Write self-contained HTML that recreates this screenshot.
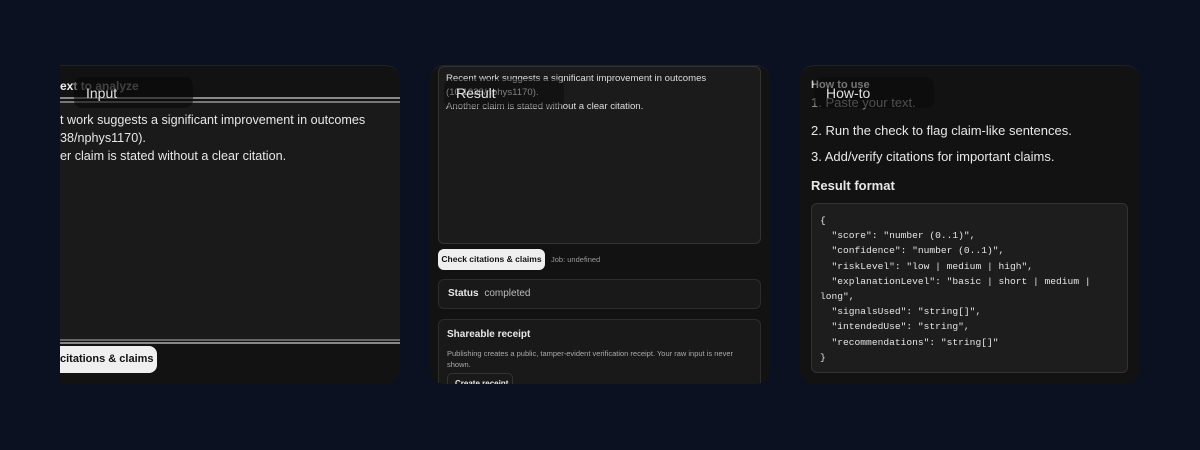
<!DOCTYPE html>
<html><head><meta charset="utf-8"><style>
*{margin:0;padding:0;box-sizing:border-box}
body{width:1200px;height:450px;background:#0b1120;font-family:"Liberation Sans",sans-serif;position:relative;overflow:hidden;color:#e8e8e8}
.a{position:absolute}
.card{position:absolute;top:65px;width:340px;height:319px;background:#121212;border-radius:14px;overflow:hidden;border-top:1px solid #222}
.pill{position:absolute;background:rgba(8,8,8,0.55);border-radius:8px;font-size:14px;color:#e0e0e0;padding-left:12px;line-height:32px}
.mono{font-family:"Liberation Mono","DejaVu Sans Mono",monospace}
</style></head><body>

<!-- Panel 1 -->
<div class="card" style="left:60px;border-radius:0 14px 14px 0">
 <div class="a" style="left:0;top:13px;font-size:12px;font-weight:bold;color:#eee">ext <span style="color:#888">to analyze</span></div>
 <div class="a" style="left:0;top:31px;width:340px;height:6px;border-top:2px solid #888;border-bottom:2px solid #777"></div>
 <div class="a" style="left:0;top:37px;width:340px;height:236px;background:#1a1a1a"></div>
 <div class="a" style="left:0;top:45px;font-size:12.6px;line-height:18px;color:#e8e8e8;white-space:nowrap">t work suggests a significant improvement in outcomes<br>38/nphys1170).<br>er claim is stated without a clear citation.</div>
 <div class="a" style="left:0;top:273px;width:340px;height:5px;border-top:2px solid #666;border-bottom:2px solid #888"></div>
 <div class="a" style="left:0;top:280px;width:97px;height:27px;background:#efefef;border-radius:0 8px 8px 0;color:#111;font-size:11px;font-weight:bold;line-height:27px;white-space:nowrap">citations &amp; claims</div>
</div>
<div class="pill" style="left:74px;top:77px;width:119px;height:31px">Input</div>

<!-- Panel 2 -->
<div class="card" style="left:430px">
 <div class="a" style="left:8px;top:0;width:323px;height:178px;background:#1b1b1b;border:1px solid #333;border-radius:6px"></div>
 <div class="a" style="left:16px;top:6px;font-size:9.6px;line-height:14px;color:#ddd;white-space:nowrap">Recent work suggests a significant improvement in outcomes<br>(10.1038/nphys1170).<br>Another claim is stated without a clear citation.</div>
 <div class="a" style="left:8px;top:183px;width:107px;height:21px;background:#efefef;border-radius:6px;color:#111;font-size:8.5px;font-weight:bold;line-height:21px;text-align:center;white-space:nowrap">Check citations &amp; claims</div>
 <div class="a" style="left:121px;top:189px;font-size:7.5px;color:#999">Job: undefined</div>
 <div class="a" style="left:8px;top:213px;width:323px;height:30px;background:#191919;border:1px solid #2c2c2c;border-radius:6px;font-size:10px;line-height:28px;padding-left:9px"><b>Status</b> <span style="color:#bbb;margin-left:3px">completed</span></div>
 <div class="a" style="left:8px;top:253px;width:323px;height:80px;background:#191919;border:1px solid #2c2c2c;border-radius:6px">
  <div class="a" style="left:8px;top:9px;font-size:10px;font-weight:bold">Shareable receipt</div>
  <div class="a" style="left:8px;top:28px;width:300px;font-size:7.5px;line-height:11px;color:#aaa">Publishing creates a public, tamper-evident verification receipt. Your raw input is never shown.</div>
  <div class="a" style="left:8px;top:53px;width:66px;height:20px;border:1px solid #333;border-radius:5px;font-size:8px;font-weight:bold;padding:5px 0 0 7px">Create receipt</div>
 </div>
</div>
<div class="pill" style="left:444px;top:79px;width:120px;height:29px;line-height:29px;background:rgba(8,8,8,0.45)">Result</div>

<!-- Panel 3 -->
<div class="card" style="left:800px">
 <div class="a" style="left:11px;top:13px;font-size:11px;font-weight:bold;color:#ccc">How to use</div>
 <div class="a" style="left:11px;top:29px;font-size:13px;color:#888">1. Paste your text.</div>
 <div class="a" style="left:11px;top:57px;font-size:13px">2. Run the check to flag claim-like sentences.</div>
 <div class="a" style="left:11px;top:83px;font-size:13px">3. Add/verify citations for important claims.</div>
 <div class="a" style="left:11px;top:112px;font-size:13px;font-weight:bold">Result format</div>
 <div class="a mono" style="left:11px;top:137px;width:317px;height:170px;background:#1d1d1d;border:1px solid #333;border-radius:6px;padding:9px 8px;font-size:9.6px;line-height:15.2px;white-space:pre;color:#e5e5e5">{
  "score": "number (0..1)",
  "confidence": "number (0..1)",
  "riskLevel": "low | medium | high",
  "explanationLevel": "basic | short | medium |
long",
  "signalsUsed": "string[]",
  "intendedUse": "string",
  "recommendations": "string[]"
}</div>
</div>
<div class="pill" style="left:814px;top:77px;width:120px;height:31px;background:rgba(8,8,8,0.45)">How-to</div>

</body></html>
